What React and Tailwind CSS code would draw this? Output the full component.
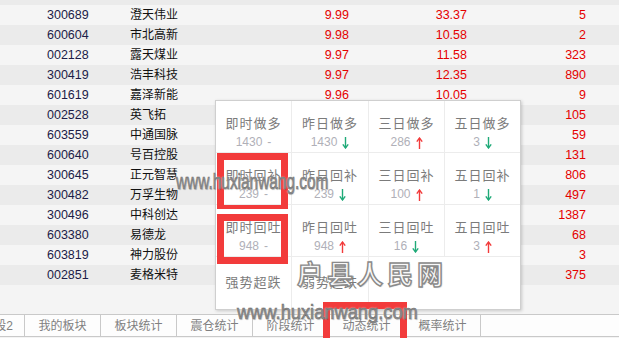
import React from 'react';

const rows = [
    { code: '300688', name: '创业黑马', price: '10.00', last: '21.35', vol: '12' },
    { code: '300689', name: '澄天伟业', price: '9.99', last: '33.37', vol: '5' },
    { code: '600604', name: '市北高新', price: '9.98', last: '10.58', vol: '2' },
    { code: '002128', name: '露天煤业', price: '9.97', last: '11.58', vol: '323' },
    { code: '300419', name: '浩丰科技', price: '9.97', last: '12.35', vol: '890' },
    { code: '601619', name: '嘉泽新能', price: '9.96', last: '10.05', vol: '9' },
    { code: '002528', name: '英飞拓', price: '9.96', last: '9.93', vol: '105' },
    { code: '603559', name: '中通国脉', price: '9.95', last: '41.24', vol: '59' },
    { code: '600640', name: '号百控股', price: '9.95', last: '19.67', vol: '131' },
    { code: '300645', name: '正元智慧', price: '9.94', last: '45.23', vol: '806' },
    { code: '300482', name: '万孚生物', price: '9.93', last: '51.08', vol: '497' },
    { code: '300496', name: '中科创达', price: '9.92', last: '38.66', vol: '1387' },
    { code: '603380', name: '易德龙', price: '9.91', last: '29.52', vol: '68' },
    { code: '603819', name: '神力股份', price: '9.90', last: '35.43', vol: '3' },
    { code: '002851', name: '麦格米特', price: '9.90', last: '48.41', vol: '375' },
];

const stats = [
    [['即时做多', '1430', 'none'], ['昨日做多', '1430', 'down'], ['三日做多', '286', 'up'], ['五日做多', '3', 'down']],
    [['即时回补', '239', 'none'], ['昨日回补', '239', 'down'], ['三日回补', '100', 'up'], ['五日回补', '1', 'down']],
    [['即时回吐', '948', 'none'], ['昨日回吐', '948', 'up'], ['三日回吐', '16', 'down'], ['五日回吐', '3', 'up']],
];

const tabs = ['我的板块', '板块统计', '震仓统计', '阶段统计', '动态统计', '概率统计'];

const Arrow = ({ dir }) => {
    if (dir === 'none') return <span className="text-[#b0b0b8]">-</span>;
    const color = dir === 'up' ? '#f23b3b' : '#1faa78';
    return (
        <svg width="7" height="12" viewBox="0 0 7 12" className={dir === 'down' ? 'rotate-180' : ''}>
            <line x1="3.5" y1="1" x2="3.5" y2="12" stroke={color} strokeWidth="1.4" />
            <polyline points="0.8,4.6 3.5,1 6.2,4.6" fill="none" stroke={color} strokeWidth="1.4" />
        </svg>
    );
};

const StatCell = ({ title, value, dir, col }) => (
    <div className={`h-[52px] flex flex-col items-center pt-[13px] border-b border-[#ececec] ${col < 3 ? 'border-r' : ''}`}>
        <div className="text-[13px] leading-[19px] tracking-[1px] text-[#7b7b7b]">{title}</div>
        <div className="flex items-center gap-[5px] text-[12px] leading-[19px] text-[#b0b0b8]">
            <span>{value}</span>
            <Arrow dir={dir} />
        </div>
    </div>
);

const App = () => {
    return (
        <div className="relative w-[619px] h-[338px] overflow-hidden bg-[#f4f4f4] font-['Liberation_Sans','Noto_Sans_CJK_SC',sans-serif]">
            <div className="h-[314px] overflow-hidden">
                <div className="-mt-[15px] flex flex-col">
                    {rows.map((r, i) => (
                        <div key={r.code} className={`h-[20px] flex items-center ${i % 2 === 0 ? 'bg-[#ebebeb]' : 'bg-[#f5f5f5]'}`}>
                            <div className="w-[130px] pl-[47px] text-[12.5px] text-[#1c1c48]">{r.code}</div>
                            <div className="w-[150px] text-[12px] text-[#111]">{r.name}</div>
                            <div className="w-[69px] text-right text-[12.5px] text-[#e50000]">{r.price}</div>
                            <div className="w-[118px] text-right text-[12.5px] text-[#e50000]">{r.last}</div>
                            <div className="w-[119px] text-right text-[12.5px] text-[#e50000]">{r.vol}</div>
                        </div>
                    ))}
                </div>
            </div>

            <div className="h-[23px] flex bg-[#fdfdfd] border-t border-b border-[#c9c9c9] text-[12px] text-[#808080]">
                <div className="w-[24px] overflow-hidden flex justify-end items-center pr-[11px] whitespace-nowrap">阶段2</div>
                {tabs.map(t => (
                    <div key={t} className="w-[76px] border-l border-[#c9c9c9] flex items-center justify-center">{t}</div>
                ))}
                <div className="flex-1 border-l border-[#c9c9c9]"></div>
            </div>

            <div className="absolute left-[215px] top-[100px] w-[306px] h-[210px] bg-white border border-[#cfcfcf] shadow-[1px_1px_3px_rgba(0,0,0,0.18)]">
                <div className="grid grid-cols-[76px_77px_76px_75px]">
                    {stats.map((row, ri) => row.map(([title, value, dir], ci) => (
                        <StatCell key={`${ri}-${ci}`} title={title} value={value} dir={dir} col={ci} />
                    )))}
                    <div className="h-[52px] flex items-center justify-center border-r border-[#ececec] text-[13px] tracking-[1px] text-[#7b7b7b]">强势超跌</div>
                    <div className="h-[52px] flex items-center justify-center border-r border-[#ececec] text-[13px] tracking-[1px] text-[#7b7b7b]">弱势超跌</div>
                    <div className="h-[52px]"></div>
                    <div className="h-[52px]"></div>
                </div>
            </div>

            <div className="absolute left-[217px] top-[153px] w-[71px] h-[56px] border-[7px] border-b-[4px] border-[#f23b3b]"></div>
            <div className="absolute left-[217px] top-[214px] w-[71px] h-[50px] border-[7px] border-[#f23b3b]"></div>
            <div className="absolute left-[323px] top-[302px] w-[84px] h-[44px] border-[7px] border-[#f23b3b]"></div>

            <div className="absolute left-[297px] top-[260px] whitespace-nowrap text-[26px] leading-[30px] tracking-[4px] font-bold text-[#f8f8f8] [-webkit-text-stroke:1.4px_#8a8a8a] [text-shadow:1px_1px_1px_rgba(0,0,0,0.2)]">户县人民网</div>
            <div className="absolute left-[176px] top-[170px] origin-left scale-x-[0.7] whitespace-nowrap text-[22px] leading-[24px] text-[#8e8e8e] [-webkit-text-stroke:0.6px_#6f6f6f] [text-shadow:0_0_2px_#fff,1px_1px_1px_rgba(0,0,0,0.25)]">www.huxianwang.com</div>
            <div className="absolute left-[237px] top-[300px] origin-left scale-x-[0.87] whitespace-nowrap text-[21px] leading-[24px] text-[#8e8e8e] [-webkit-text-stroke:0.6px_#6f6f6f] [text-shadow:0_0_2px_#fff,1px_1px_1px_rgba(0,0,0,0.25)]">www.huxianwang.com</div>
        </div>
    );
};

export default App;
